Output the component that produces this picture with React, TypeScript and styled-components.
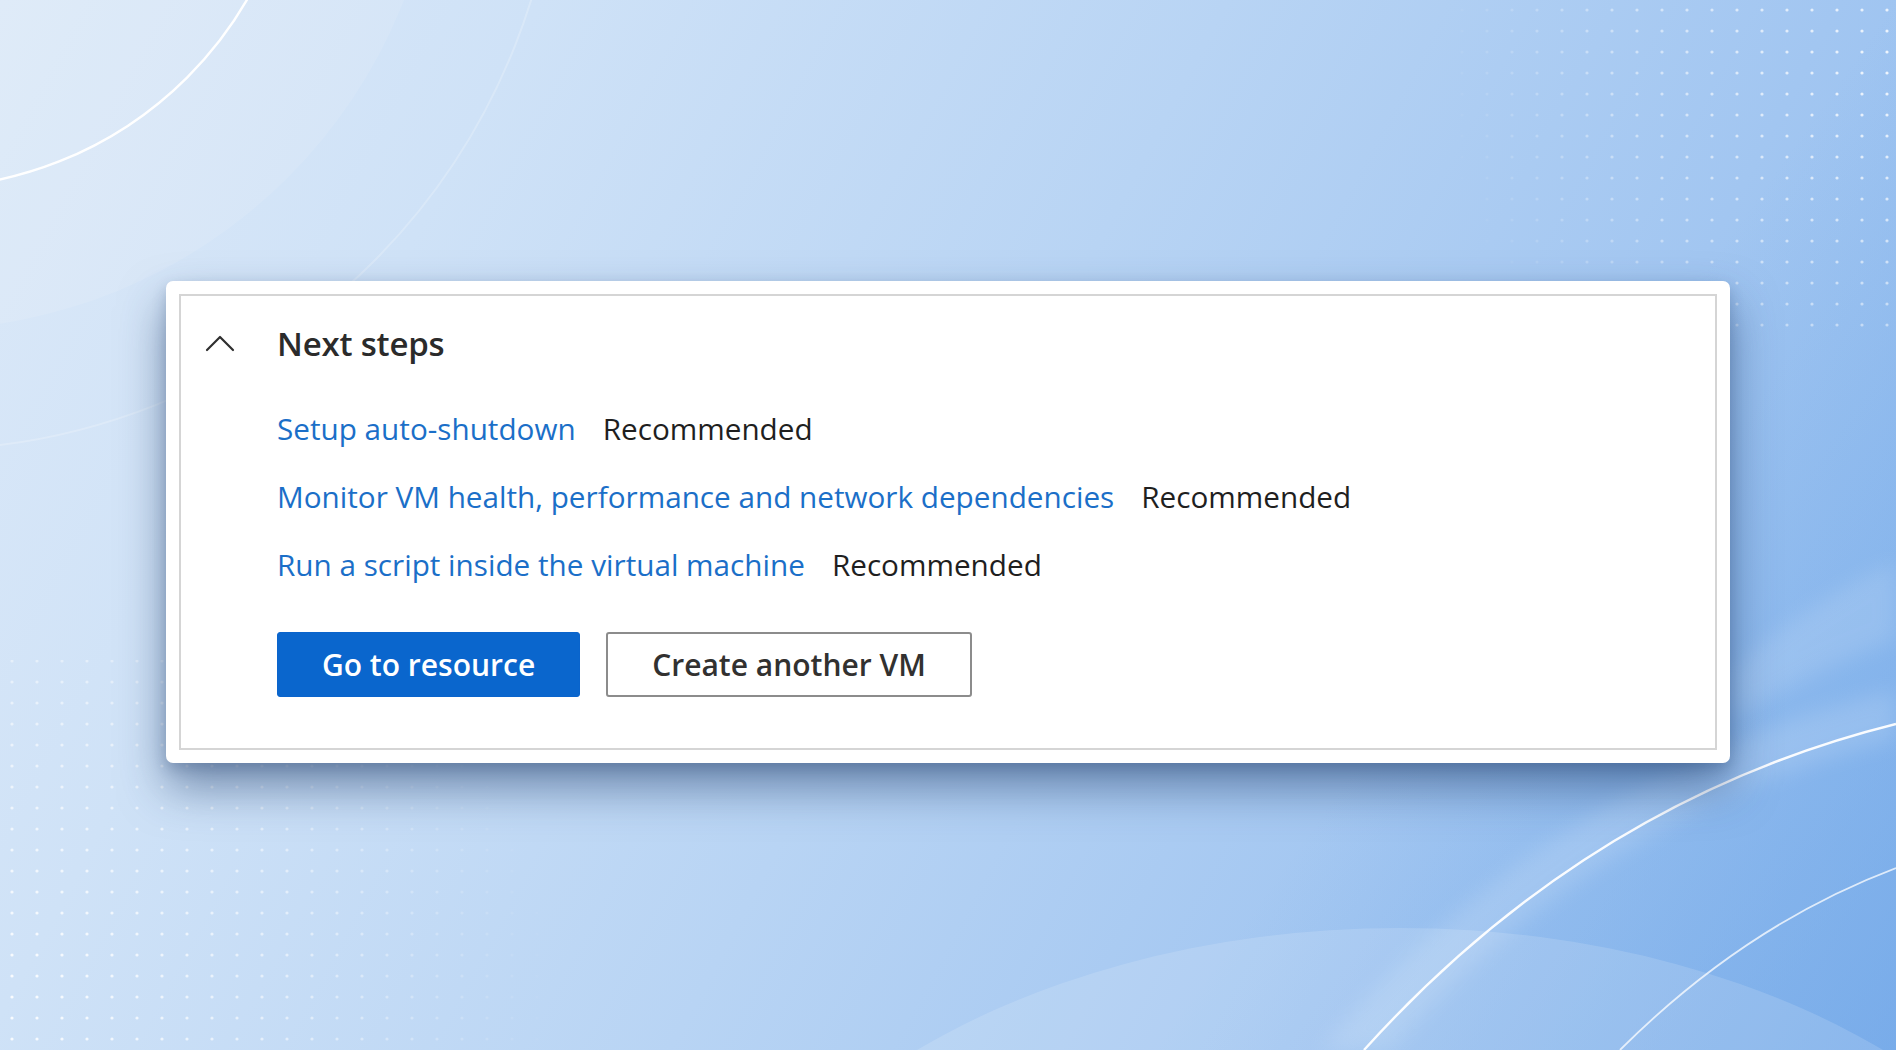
import React from "react";
import styled, { createGlobalStyle } from "styled-components";

const GlobalStyle = createGlobalStyle`
  html, body {
    margin: 0;
    padding: 0;
  }
  body {
    font-family: "Open Sans", "Noto Sans", "Liberation Sans", sans-serif;
  }
  * {
    box-sizing: border-box;
  }
`;

const Page = styled.div`
  position: relative;
  min-height: 100vh;
  overflow: hidden;
  padding: 281px 166px 0;
  background: linear-gradient(118deg, #dce9f8 0%, #cfe2f7 22%, #b8d4f4 50%, #a2c6f1 75%, #8ab8ee 100%);
`;

const Backdrop = styled.svg`
  position: absolute;
  inset: 0;
  width: 100%;
  height: 100%;
  z-index: 0;
`;

const Card = styled.section`
  position: relative;
  z-index: 1;
  background: #fff;
  border-radius: 7px;
  padding: 13px;
  box-shadow: 0 24px 46px rgba(30, 60, 105, 0.52), 0 6px 14px rgba(30, 60, 105, 0.22);
`;

const Panel = styled.div`
  border: 2px solid #d5d5d5;
  padding: 25px 24px 51px 24px;
  display: flex;
  flex-direction: column;
`;

const Header = styled.div`
  display: flex;
  align-items: center;
  height: 44px;
`;

const Toggle = styled.button`
  width: 72px;
  padding: 0;
  border: none;
  background: none;
  display: flex;
  align-items: center;
  cursor: pointer;
`;

const Title = styled.h2`
  margin: 0;
  font-family: "Open Sans", "Noto Sans", sans-serif;
  font-weight: 600;
  font-size: 33px;
  color: #2b2b2b;
  letter-spacing: -0.2px;
`;

const Steps = styled.div`
  margin: 43px 0 0 72px;
  display: flex;
  flex-direction: column;
  gap: 27px;
`;

const StepRow = styled.div`
  display: flex;
  align-items: center;
  gap: 27px;
  height: 41px;
  font-family: "Open Sans", "Noto Sans", sans-serif;
  font-size: 29.7px;
`;

const StepLink = styled.a`
  color: #1b6fc8;
  text-decoration: none;
  cursor: pointer;
`;

const Tag = styled.span`
  color: #1f1f1f;
`;

const Actions = styled.div`
  display: flex;
  gap: 26px;
  margin: 47px 0 0 72px;
`;

const Button = styled.button<{ $primary?: boolean }>`
  height: 65px;
  padding: 0 44px;
  border-radius: 3px;
  border: ${(p) => (p.$primary ? "1px solid #0a64cc" : "2px solid #8c8c8c")};
  background: ${(p) => (p.$primary ? "#0a66cd" : "#fff")};
  color: ${(p) => (p.$primary ? "#fff" : "#323130")};
  font-family: "Open Sans", "Noto Sans", sans-serif;
  font-weight: 600;
  font-size: 30px;
  cursor: pointer;
`;

const steps = [
  "Setup auto-shutdown",
  "Monitor VM health, performance and network dependencies",
  "Run a script inside the virtual machine",
];

function Background() {
  return (
    <Backdrop viewBox="0 0 1896 1050" preserveAspectRatio="none">
      <defs>
        <pattern id="dots" width="25" height="21" patternUnits="userSpaceOnUse">
          <circle cx="12" cy="10" r="1.6" fill="#ffffff" />
        </pattern>
        <radialGradient id="fadeTR" cx="1896" cy="60" r="460" gradientUnits="userSpaceOnUse">
          <stop offset="0" stopColor="#fff" stopOpacity="0.85" />
          <stop offset="0.6" stopColor="#fff" stopOpacity="0.45" />
          <stop offset="1" stopColor="#fff" stopOpacity="0" />
        </radialGradient>
        <radialGradient id="fadeBL" cx="0" cy="1000" r="560" gradientUnits="userSpaceOnUse">
          <stop offset="0" stopColor="#fff" stopOpacity="0.9" />
          <stop offset="0.55" stopColor="#fff" stopOpacity="0.5" />
          <stop offset="1" stopColor="#fff" stopOpacity="0" />
        </radialGradient>
        <mask id="maskTR">
          <rect x="1380" y="0" width="516" height="330" fill="url(#fadeTR)" />
        </mask>
        <mask id="maskBL">
          <rect x="0" y="660" width="620" height="390" fill="url(#fadeBL)" />
        </mask>
        <linearGradient id="deepBR" x1="1400" y1="700" x2="1896" y2="1050" gradientUnits="userSpaceOnUse">
          <stop offset="0" stopColor="#6fa6e6" stopOpacity="0" />
          <stop offset="1" stopColor="#6aa2e6" stopOpacity="0.55" />
        </linearGradient>
        <filter id="soft" x="-20%" y="-20%" width="140%" height="140%">
          <feGaussianBlur stdDeviation="10" />
        </filter>
      </defs>

      <rect width="1896" height="1050" fill="url(#deepBR)" />

      {/* soft bands top left */}
      <circle cx="-80" cy="-190" r="520" fill="#ffffff" opacity="0.1" />
      <circle cx="-80" cy="-190" r="640" fill="none" stroke="#ffffff" strokeOpacity="0.22" strokeWidth="2" />
      <circle cx="-80" cy="-190" r="378" fill="none" stroke="#ffffff" strokeWidth="2.4" />

      {/* dotted grids */}
      <rect x="1380" y="0" width="516" height="330" fill="url(#dots)" mask="url(#maskTR)" />
      <rect x="0" y="660" width="620" height="390" fill="url(#dots)" mask="url(#maskBL)" />

      {/* light dome and arcs bottom right */}
      <ellipse cx="1400" cy="1400" rx="720" ry="472" fill="#ffffff" opacity="0.14" />
      <path d="M1320 1050 Q 1560 770 1896 690 L1896 740 Q 1600 810 1390 1050 Z" fill="#ffffff" opacity="0.14" filter="url(#soft)" />
      <path d="M1730 672 Q 1810 600 1896 562 L1896 640 Q 1810 670 1730 720 Z" fill="#ffffff" opacity="0.12" filter="url(#soft)" />
      <path d="M1364 1050 Q 1590 800 1896 724" fill="none" stroke="#ffffff" strokeWidth="2.4" strokeOpacity="0.95" />
      <path d="M1620 1050 Q 1745 925 1896 868" fill="none" stroke="#ffffff" strokeWidth="1.8" strokeOpacity="0.75" />
    </Backdrop>
  );
}

function ChevronUp() {
  return (
    <svg width="30" height="18" viewBox="0 0 30 18">
      <path d="M2 16 L15 3 L28 16" fill="none" stroke="#2f2f2f" strokeWidth="2.2" strokeLinecap="round" strokeLinejoin="round" />
    </svg>
  );
}

const App = () => {
  return (
    <>
      <GlobalStyle />
      <Page>
        <Background />
        <Card>
          <Panel>
            <Header>
              <Toggle aria-label="Collapse">
                <ChevronUp />
              </Toggle>
              <Title>Next steps</Title>
            </Header>

            <Steps>
              {steps.map((label) => (
                <StepRow key={label}>
                  <StepLink>{label}</StepLink>
                  <Tag>Recommended</Tag>
                </StepRow>
              ))}
            </Steps>

            <Actions>
              <Button $primary>Go to resource</Button>
              <Button>Create another VM</Button>
            </Actions>
          </Panel>
        </Card>
      </Page>
    </>
  );
};

export default App;
